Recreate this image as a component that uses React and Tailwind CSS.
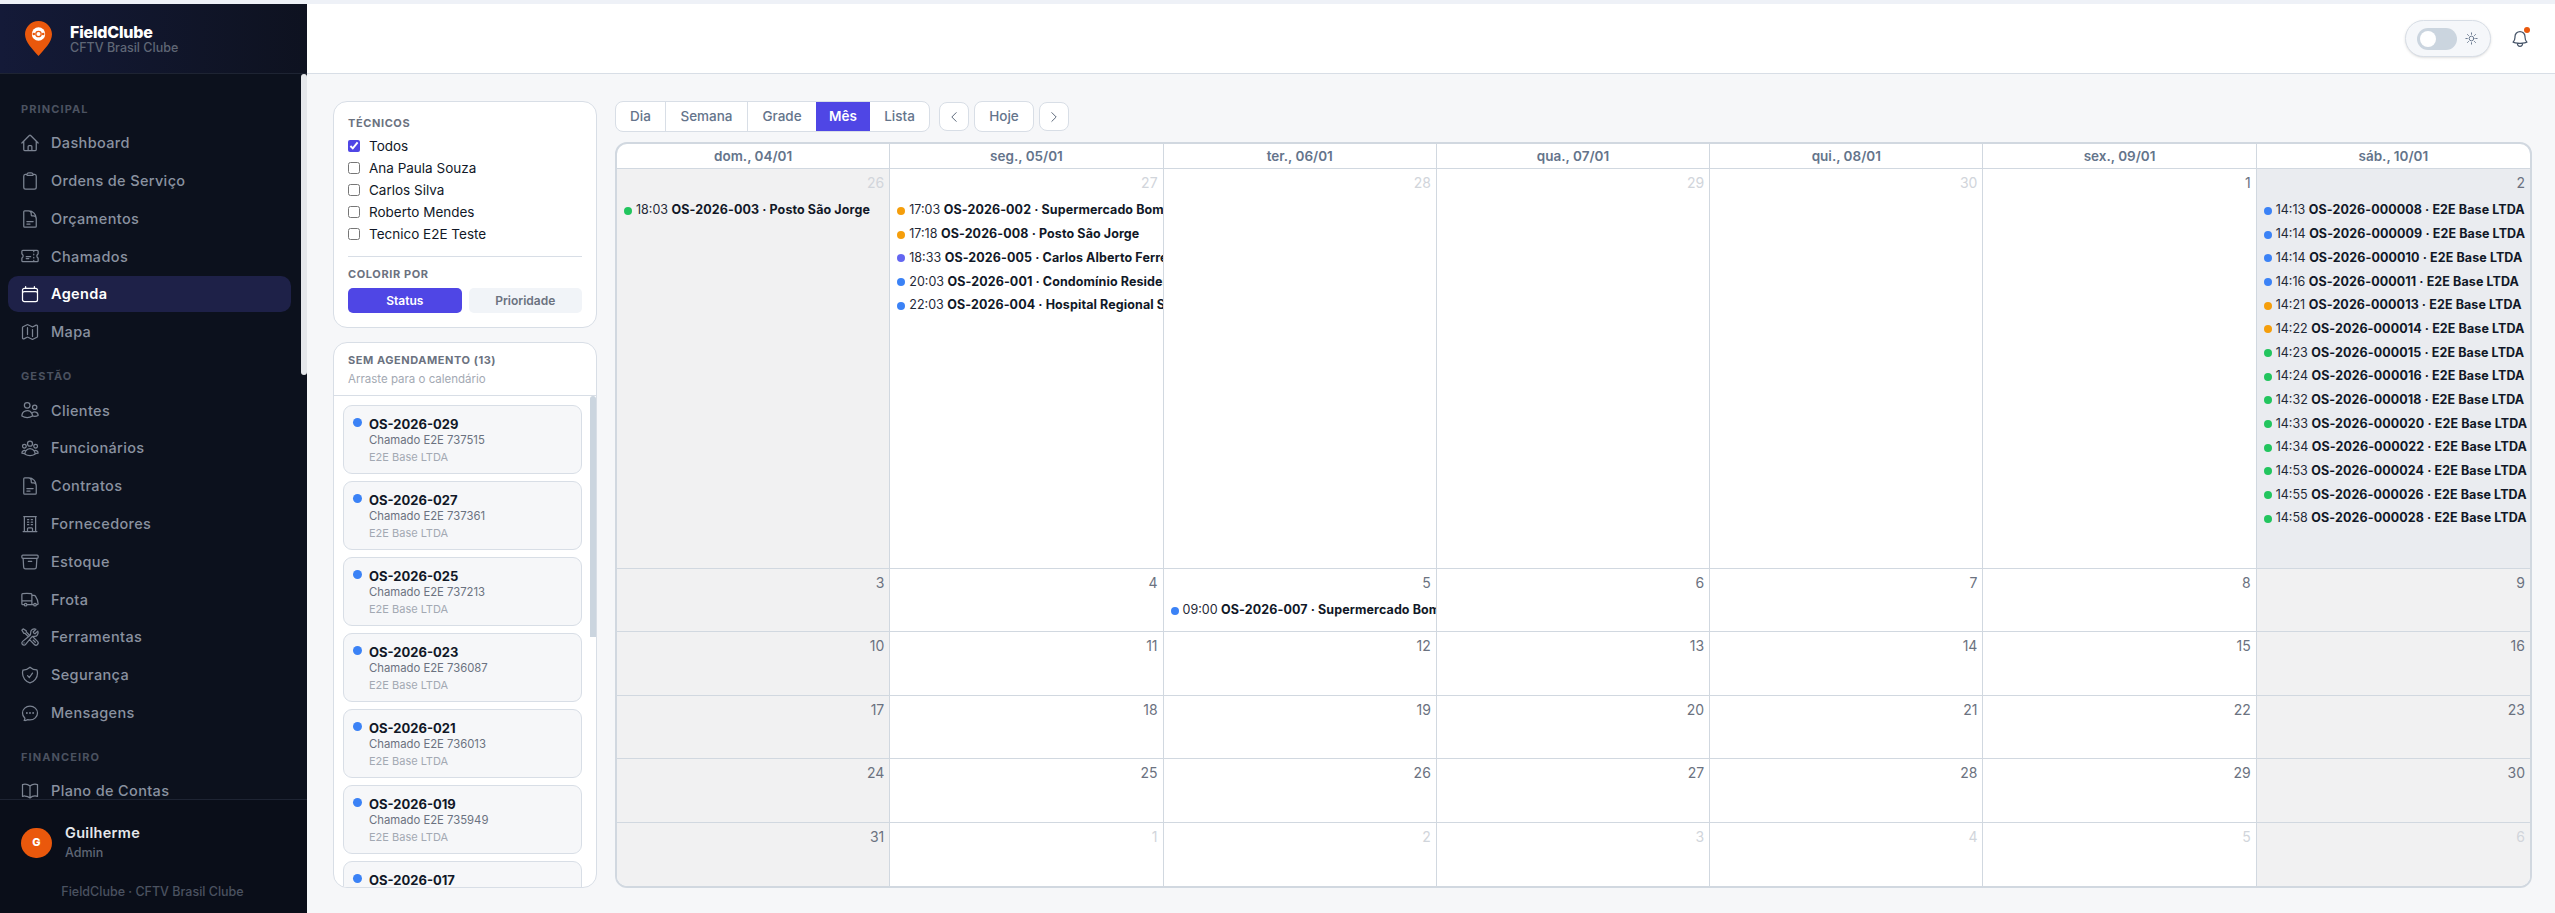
import React from "react";
import {
  HiOutlineHome, HiOutlineClipboard, HiOutlineDocumentText, HiOutlineTicket, HiOutlineCalendar, HiOutlineMap,
  HiOutlineUsers, HiOutlineUserGroup, HiOutlineBuildingOffice, HiOutlineArchiveBox, HiOutlineTruck,
  HiOutlineWrenchScrewdriver, HiOutlineShieldCheck, HiOutlineChatBubbleOvalLeftEllipsis, HiOutlineBookOpen,
  HiOutlineBell, HiOutlineSun, HiOutlineChevronLeft, HiOutlineChevronRight,
} from "react-icons/hi2";

const nav = [
  { label: "PRINCIPAL", items: [
    ["Dashboard", HiOutlineHome], ["Ordens de Serviço", HiOutlineClipboard], ["Orçamentos", HiOutlineDocumentText],
    ["Chamados", HiOutlineTicket], ["Agenda", HiOutlineCalendar, true], ["Mapa", HiOutlineMap],
  ]},
  { label: "GESTÃO", items: [
    ["Clientes", HiOutlineUsers], ["Funcionários", HiOutlineUserGroup], ["Contratos", HiOutlineDocumentText],
    ["Fornecedores", HiOutlineBuildingOffice], ["Estoque", HiOutlineArchiveBox], ["Frota", HiOutlineTruck],
    ["Ferramentas", HiOutlineWrenchScrewdriver], ["Segurança", HiOutlineShieldCheck], ["Mensagens", HiOutlineChatBubbleOvalLeftEllipsis],
  ]},
  { label: "FINANCEIRO", items: [["Plano de Contas", HiOutlineBookOpen]] },
];

const dotClass = { b: "bg-[#3b82f6]", a: "bg-[#f59e0b]", g: "bg-[#22c55e]", v: "bg-[#6366f1]" };

const ev = (c, t, os, name) => ({ c, t, os, name });
const base = "E2E Base LTDA";
const cells = [
  { n: 26, muted: true, wk: true, events: [ev("g", "18:03", "OS-2026-003", "Posto São Jorge")] },
  { n: 27, muted: true, events: [
    ev("a", "17:03", "OS-2026-002", "Supermercado Bom Preço"), ev("a", "17:18", "OS-2026-008", "Posto São Jorge"),
    ev("v", "18:33", "OS-2026-005", "Carlos Alberto Ferreira"), ev("b", "20:03", "OS-2026-001", "Condomínio Residencial"),
    ev("b", "22:03", "OS-2026-004", "Hospital Regional Sul"),
  ]},
  { n: 28, muted: true }, { n: 29, muted: true }, { n: 30, muted: true }, { n: 1 },
  { n: 2, today: true, events: [
    ev("b", "14:13", "OS-2026-000008", base), ev("b", "14:14", "OS-2026-000009", base), ev("b", "14:14", "OS-2026-000010", base),
    ev("b", "14:16", "OS-2026-000011", base), ev("a", "14:21", "OS-2026-000013", base), ev("a", "14:22", "OS-2026-000014", base),
    ev("g", "14:23", "OS-2026-000015", base), ev("g", "14:24", "OS-2026-000016", base), ev("g", "14:32", "OS-2026-000018", base),
    ev("g", "14:33", "OS-2026-000020", base), ev("g", "14:34", "OS-2026-000022", base), ev("g", "14:53", "OS-2026-000024", base),
    ev("g", "14:55", "OS-2026-000026", base), ev("g", "14:58", "OS-2026-000028", base),
  ]},
  { n: 3, wk: true }, { n: 4 },
  { n: 5, events: [ev("b", "09:00", "OS-2026-007", "Supermercado Bom Preço")] },
  { n: 6 }, { n: 7 }, { n: 8 }, { n: 9, wk: true },
  { n: 10, wk: true }, { n: 11 }, { n: 12 }, { n: 13 }, { n: 14 }, { n: 15 }, { n: 16, wk: true },
  { n: 17, wk: true }, { n: 18 }, { n: 19 }, { n: 20 }, { n: 21 }, { n: 22 }, { n: 23, wk: true },
  { n: 24, wk: true }, { n: 25 }, { n: 26 }, { n: 27 }, { n: 28 }, { n: 29 }, { n: 30, wk: true },
  { n: 31, wk: true }, { n: 1, muted: true }, { n: 2, muted: true }, { n: 3, muted: true }, { n: 4, muted: true }, { n: 5, muted: true }, { n: 6, muted: true, wk: true },
];

const heads = ["dom., 04/01", "seg., 05/01", "ter., 06/01", "qua., 07/01", "qui., 08/01", "sex., 09/01", "sáb., 10/01"];
const backlog = [
  ["OS-2026-029", "Chamado E2E 737515"], ["OS-2026-027", "Chamado E2E 737361"], ["OS-2026-025", "Chamado E2E 737213"],
  ["OS-2026-023", "Chamado E2E 736087"], ["OS-2026-021", "Chamado E2E 736013"], ["OS-2026-019", "Chamado E2E 735949"],
  ["OS-2026-017", "Chamado E2E 735871"],
];

function Logo() {
  return (
    <svg viewBox="0 0 27 35" className="h-[35px] w-[27px] shrink-0">
      <path d="M13.5 0C6 0 0 6 0 13.3c0 7.6 7.4 14.9 13.5 21.7C19.6 28.2 27 20.9 27 13.3 27 6 21 0 13.5 0z" fill="#ea580c" />
      <circle cx="13.5" cy="13" r="6.7" fill="#fff" />
      <circle cx="13.5" cy="13" r="2.7" fill="none" stroke="#ea580c" strokeWidth="1.3" />
      <circle cx="8.8" cy="13" r="1.3" fill="#ea580c" />
      <circle cx="18.2" cy="13" r="1.3" fill="#ea580c" />
    </svg>
  );
}

function Sidebar() {
  return (
    <aside className="flex h-full w-[307px] shrink-0 flex-col bg-[#0c111d]">
      <div className="flex h-[70px] shrink-0 items-center gap-[18px] border-b border-[#1e2433] bg-gradient-to-r from-[#141a38] to-[#0e1220] pl-[25px]">
        <Logo />
        <div className="flex flex-col">
          <span className="text-[16px] leading-[18px] font-extrabold tracking-[-0.2px] text-white">FieldClube</span>
          <span className="text-[12.5px] leading-[13px] font-medium text-[#5f6675]">CFTV Brasil Clube</span>
        </div>
      </div>
      <nav className="relative min-h-0 flex-1 overflow-hidden pt-[27px]">
        <div className="absolute top-0 right-0 h-[301px] w-[6px] rounded-full bg-[#e5e7eb]" />
        {nav.map((s) => (
          <div key={s.label} className="mb-[18.5px]">
            <div className="mb-[8px] h-[16px] pl-[21px] text-[11px] leading-[16px] font-bold tracking-[1.1px] text-[#4b5260]">{s.label}</div>
            <div className="flex flex-col gap-[1.8px]">
              {s.items.map(([name, Icon, active]) => (
                <div key={name} className={active
                  ? "ml-[8px] flex h-[36px] w-[283px] items-center gap-[11px] rounded-[10px] bg-[#1e2148] pl-[12px] text-white"
                  : "ml-[8px] flex h-[36px] w-[283px] items-center gap-[11px] rounded-[10px] pl-[12px] text-[#8a92a0]"}>
                  <Icon className={active ? "h-[20px] w-[20px] shrink-0 text-white" : "h-[20px] w-[20px] shrink-0 text-[#7c8492]"} />
                  <span className={active ? "text-[14.5px] font-semibold tracking-[0.35px]" : "text-[14.5px] font-medium tracking-[0.35px]"}>{name}</span>
                </div>
              ))}
            </div>
          </div>
        ))}
      </nav>
      <div className="h-[114px] shrink-0 border-t border-[#1e2433] bg-[#0a0e19]">
        <div className="flex items-center gap-[13px] pt-[24px] pl-[21px]">
          <div className="flex h-[30px] w-[31px] items-center justify-center rounded-full bg-[#ea580c] text-[11px] font-extrabold text-white">G</div>
          <div className="flex flex-col">
            <span className="text-[14.5px] leading-[17px] font-semibold tracking-[0.3px] text-[#e5e7eb]">Guilherme</span>
            <span className="mt-[4px] text-[12.5px] leading-[16px] font-medium text-[#5f6675]">Admin</span>
          </div>
        </div>
        <div className="mt-[23px] pr-[2px] text-center text-[12.5px] leading-[16px] font-medium text-[#4b5260]">FieldClube · CFTV Brasil Clube</div>
      </div>
    </aside>
  );
}

function TopBar() {
  return (
    <header className="flex h-[70px] shrink-0 items-center justify-end gap-[19px] border-b border-[#d8dee6] bg-white pr-[25px]">
      <div className="flex h-[37px] w-[86px] items-center gap-[7px] rounded-full border border-[#d8dee6] bg-[#f5f7fa] pl-[11px] shadow-sm">
        <div className="flex h-[22px] w-[40px] items-center rounded-full bg-[#cbd5df] pl-[3px]">
          <div className="h-[16px] w-[16px] rounded-full bg-white" />
        </div>
        <HiOutlineSun className="h-[15px] w-[15px] text-[#64748b]" />
      </div>
      <div className="relative">
        <HiOutlineBell className="h-[20px] w-[20px] text-[#475569]" />
        <span className="absolute -top-[2px] right-0 h-[6px] w-[6px] rounded-full bg-[#ea580c]" />
      </div>
    </header>
  );
}

function Check({ label, checked }) {
  return (
    <label className="flex h-[22px] items-center gap-[9px] text-[13.5px] text-[#111827]">
      <input type="checkbox" checked={!!checked} readOnly className="m-0 h-[12px] w-[12px] accent-[#4f46e5]" />
      {label}
    </label>
  );
}

function Filters() {
  return (
    <div className="h-[227px] shrink-0 rounded-[14px] border border-[#d8dee6] bg-white px-[14px] pt-[14px]">
      <div className="mb-[5px] text-[11px] leading-[14px] font-bold tracking-[0.6px] text-[#6b7280]">TÉCNICOS</div>
      <Check label="Todos" checked />
      <Check label="Ana Paula Souza" />
      <Check label="Carlos Silva" />
      <Check label="Roberto Mendes" />
      <Check label="Tecnico E2E Teste" />
      <div className="mt-[11px] border-t border-[#d8dee6]" />
      <div className="mt-[10px] mb-[7px] text-[11px] leading-[14px] font-bold tracking-[0.6px] text-[#6b7280]">COLORIR POR</div>
      <div className="flex gap-[7px]">
        <div className="flex h-[25px] flex-1 items-center justify-center rounded-[5px] bg-[#4f46e5] text-[12px] font-semibold text-white">Status</div>
        <div className="flex h-[25px] flex-1 items-center justify-center rounded-[5px] bg-[#f1f4f8] text-[12px] font-semibold text-[#6b7280]">Prioridade</div>
      </div>
    </div>
  );
}

function Backlog() {
  return (
    <div className="flex min-h-0 flex-1 flex-col overflow-hidden rounded-[14px] border border-[#d8dee6] bg-white">
      <div className="h-[53px] shrink-0 border-b border-[#d8dee6] px-[14px] pt-[10px]">
        <div className="text-[11px] leading-[14px] font-bold tracking-[0.55px] text-[#6b7280]">SEM AGENDAMENTO (13)</div>
        <div className="mt-[5px] text-[11.5px] leading-[14px] text-[#a3a9b3]">Arraste para o calendário</div>
      </div>
      <div className="relative min-h-0 flex-1 overflow-hidden pt-[9px] pl-[9px]">
        <div className="absolute top-0 right-0 h-[241px] w-[6px] rounded-t-sm bg-[#cbd5df]" />
        <div className="flex w-[239px] flex-col gap-[7px]">
          {backlog.map(([os, ch]) => (
            <div key={os} className="flex h-[69px] shrink-0 gap-[7px] rounded-[9px] border border-[#d8dee6] bg-[#f6f7f9] pt-[9px] pl-[9px]">
              <span className="mt-[3px] h-[9px] w-[9px] shrink-0 rounded-full bg-[#3b82f6]" />
              <div className="flex flex-col">
                <span className="text-[13px] leading-[18px] font-bold text-[#111827]">{os}</span>
                <span className="text-[11.3px] leading-[15px] text-[#6b7280]">{ch}</span>
                <span className="mt-[1px] text-[11px] leading-[16px] text-[#a3a9b3]">E2E Base LTDA</span>
              </div>
            </div>
          ))}
        </div>
      </div>
    </div>
  );
}

function Toolbar() {
  const views = [["Dia", "w-[50px]"], ["Semana", "w-[82px]"], ["Grade", "w-[68px]"], ["Mês", "w-[54px]"], ["Lista", "w-[59px]"]];
  return (
    <div className="flex h-[31px] shrink-0 items-center text-[13.5px] font-medium text-[#64748b]">
      <div className="flex h-[31px] overflow-hidden rounded-[8px] border border-[#d8dee6] bg-white">
        {views.map(([v, w], i) => (
          <div key={v} className={`${w} flex items-center justify-center ${v === "Mês" ? "bg-[#4f46e5] font-semibold text-white" : ""} ${i < 2 ? "border-r border-[#d8dee6]" : ""}`}>{v}</div>
        ))}
      </div>
      <div className="ml-[9px] flex h-[29px] w-[30px] items-center justify-center rounded-[8px] border border-[#d8dee6] bg-white">
        <HiOutlineChevronLeft className="h-[14px] w-[14px] text-[#475569]" />
      </div>
      <div className="ml-[5px] flex h-[31px] w-[60px] items-center justify-center rounded-[8px] border border-[#d8dee6] bg-white">Hoje</div>
      <div className="ml-[5px] flex h-[29px] w-[30px] items-center justify-center rounded-[8px] border border-[#d8dee6] bg-white">
        <HiOutlineChevronRight className="h-[14px] w-[14px] text-[#475569]" />
      </div>
    </div>
  );
}

function Cell({ c, i }) {
  const bg = c.today ? "bg-[#eaecf0]" : c.wk ? "bg-[#f1f1f2]" : "bg-white";
  const right = (i + 1) % 7 === 0 ? "" : "border-r";
  const bottom = i >= 35 ? "" : "border-b";
  return (
    <div className={`${bg} ${right} ${bottom} min-w-0 overflow-hidden border-[#d1d8e0] pt-[4px]`}>
      <div className={`h-[20px] pr-[5px] text-right text-[14px] leading-[20px] ${c.muted ? "text-[#d1d5db]" : "text-[#6b7280]"}`}>{c.n}</div>
      {c.events && (
        <div className="mt-[6px] flex flex-col">
          {c.events.map((e) => (
            <div key={e.os} className="ml-[7px] flex h-[23.7px] items-center gap-[4px] overflow-hidden pr-[3px] text-[12.5px] whitespace-nowrap">
              <span className={`h-[8px] w-[8px] shrink-0 rounded-full ${dotClass[e.c]}`} />
              <span className="text-[#1f2937]">{e.t} <b className="font-bold tracking-[0.1px] text-[#111827]">{e.os} · {e.name}</b></span>
            </div>
          ))}
        </div>
      )}
    </div>
  );
}

function Calendar() {
  return (
    <div className="mt-[10px] flex min-h-0 flex-1 flex-col overflow-hidden rounded-[12px] border-2 border-[#d1d8e0] bg-white">
      <div className="grid h-[25px] shrink-0 grid-cols-7 border-b border-[#d1d8e0]">
        {heads.map((h, i) => (
          <div key={h} className={`flex items-center justify-center text-[13.5px] font-semibold text-[#64748b] ${i < 6 ? "border-r border-[#d1d8e0]" : ""}`}>{h}</div>
        ))}
      </div>
      <div className="grid min-h-0 flex-1 grid-cols-7 grid-rows-[400px_repeat(5,1fr)]">
        {cells.map((c, i) => <Cell key={i} c={c} i={i} />)}
      </div>
    </div>
  );
}

export default function App() {
  return (
    <div className="flex h-[913px] w-full flex-col overflow-hidden bg-[#f6f7f9] font-['Inter',sans-serif]">
      <div className="h-[4px] shrink-0 bg-[#eef1f7]" />
      <div className="flex min-h-0 flex-1">
        <Sidebar />
        <div className="flex min-w-0 flex-1 flex-col">
          <TopBar />
          <main className="flex min-h-0 flex-1 gap-[18px] pt-[27px] pr-[23px] pb-[25px] pl-[26px]">
            <div className="flex w-[264px] shrink-0 flex-col gap-[14px]">
              <Filters />
              <Backlog />
            </div>
            <div className="flex min-w-0 flex-1 flex-col">
              <Toolbar />
              <Calendar />
            </div>
          </main>
        </div>
      </div>
    </div>
  );
}
